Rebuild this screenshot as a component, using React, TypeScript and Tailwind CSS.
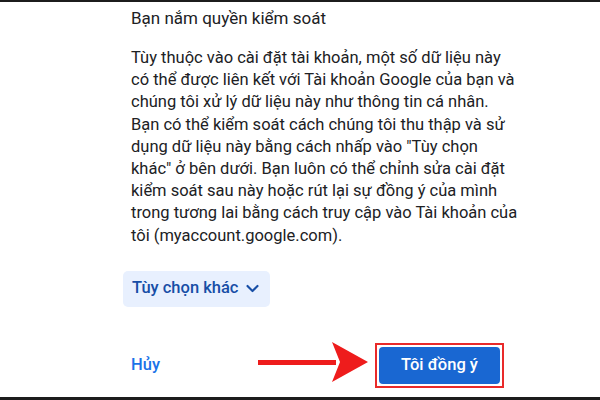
import React from 'react';

const lines = [
  'Tùy thuộc vào cài đặt tài khoản, một số dữ liệu này',
  'có thể được liên kết với Tài khoản Google của bạn và',
  'chúng tôi xử lý dữ liệu này như thông tin cá nhân.',
  'Bạn có thể kiểm soát cách chúng tôi thu thập và sử',
  'dụng dữ liệu này bằng cách nhấp vào "Tùy chọn',
  'khác" ở bên dưới. Bạn luôn có thể chỉnh sửa cài đặt',
  'kiểm soát sau này hoặc rút lại sự đồng ý của mình',
  'trong tương lai bằng cách truy cập vào Tài khoản của',
  'tôi (myaccount.google.com).',
];

const App: React.FC = () => {
  return (
    <div
      className="w-[600px] h-[400px] bg-white border-t-2 border-b-[3px] border-[#1c1c1c] overflow-hidden flex flex-col"
      style={{ fontFamily: 'Roboto, "Noto Sans", Arial, sans-serif' }}
    >
      <div className="pl-[131px] pt-[4px] flex flex-col flex-1">
        {/* Tiêu đề */}
        <h2 className="text-[17px] leading-[24px] font-normal text-[#202124]">Bạn nắm quyền kiểm soát</h2>

        {/* Nội dung */}
        <div className="mt-[17px] text-[16.5px] leading-[22.2px] text-[#202124]">
          {lines.map((line) => (
            <div key={line} className="whitespace-nowrap">{line}</div>
          ))}
        </div>

        {/* Nút tùy chọn */}
        <button className="mt-[24px] -ml-[8px] w-[147px] h-[36px] rounded-[5px] bg-[#e8f0fe] text-[#174ea6] text-[16.5px] font-medium flex items-center pl-[9px] gap-[7px]">
          Tùy chọn khác
          <svg width="15" height="15" viewBox="0 0 24 24" fill="none" stroke="currentColor" strokeWidth="3.4" strokeLinecap="round" strokeLinejoin="round">
            <path d="M4 8l8 8 8-8" />
          </svg>
        </button>

        {/* Hàng nút cuối */}
        <div className="mt-[37px] flex items-center h-[44px]">
          <span className="text-[#1a73e8] text-[16.5px] font-medium w-[127px]">Hủy</span>
          <svg width="110" height="46" viewBox="0 0 110 46" className="-mt-[6px]">
            <rect x="0" y="20" width="78" height="5" fill="#ee1c1c" />
            <path d="M74 2 L110 22 L74 42 L82 22 Z" fill="#ee1c1c" />
          </svg>
          <div className="ml-[7px] border-2 border-[#e92a2a] p-[2px]">
            <button className="w-[121px] h-[37px] rounded-[4px] bg-[#1967d2] text-white text-[16.5px] font-medium">
              Tôi đồng ý
            </button>
          </div>
        </div>
      </div>
    </div>
  );
};

export default App;
